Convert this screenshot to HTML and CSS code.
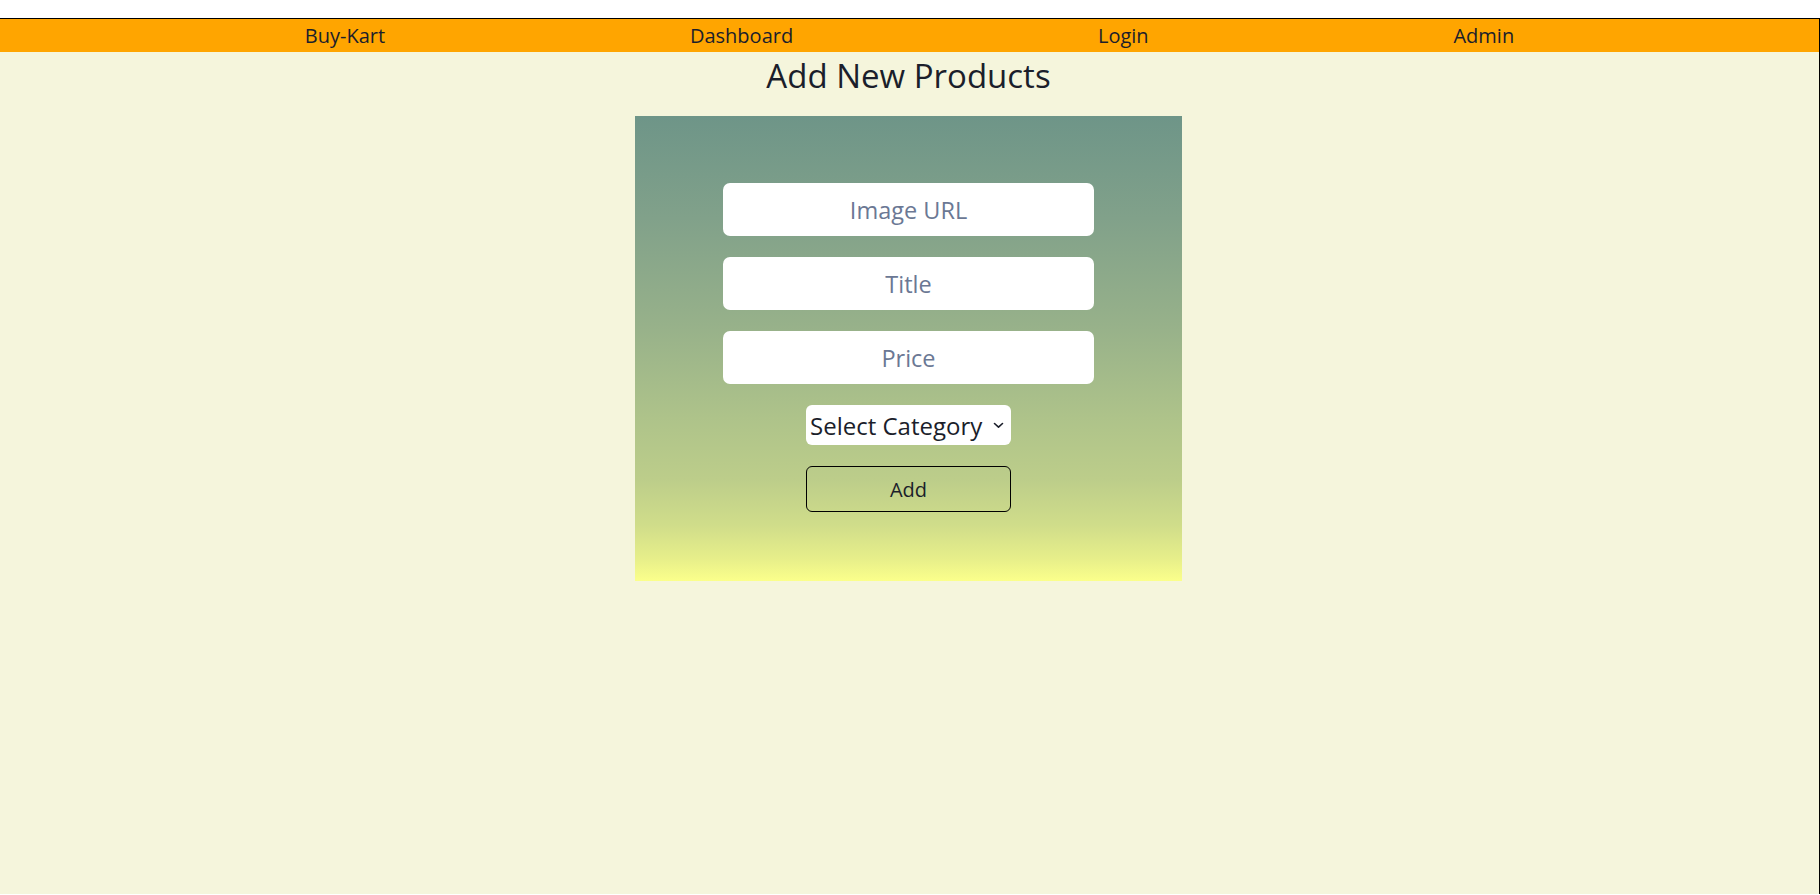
FILE: index.html
```html
<!DOCTYPE html>
<html lang="en">
<head>
<meta charset="utf-8">
<title>Buy-Kart - Add New Products</title>
<link rel="stylesheet" href="styles.css">
</head>
<body>
<div class="app">
  <nav class="navbar">
    <a class="nav-link" href="#">Buy-Kart</a>
    <a class="nav-link" href="#">Dashboard</a>
    <a class="nav-link" href="#">Login</a>
    <a class="nav-link" href="#">Admin</a>
  </nav>
  <main class="main">
    <h1 class="page-title">Add New Products</h1>
    <form class="product-card">
      <input class="field" type="text" placeholder="Image URL">
      <input class="field" type="text" placeholder="Title">
      <input class="field" type="text" placeholder="Price">
      <div class="select-wrap">
        <select class="category">
          <option>Select Category</option>
          <option>Men</option>
          <option>Women</option>
          <option>Jewelery</option>
          <option>Electronics</option>
        </select>
        <svg class="chevron" width="11" height="7" viewBox="0 0 11 7" aria-hidden="true">
          <path d="M1.5 1.5 L5.5 5.2 L9.5 1.5" fill="none" stroke="#1b1e2b" stroke-width="1.6" stroke-linecap="round" stroke-linejoin="round"/>
        </svg>
      </div>
      <button class="add-btn" type="button">Add</button>
    </form>
  </main>
</div>
</body>
</html>
```

FILE: styles.css
```css
html, body {
  margin: 0;
  padding: 0;
}

body {
  background: #ffffff;
  font-family: "Open Sans", "Noto Sans", sans-serif;
  color: #1b1e2b;
}

.app {
  margin-top: 18px;
  border-top: 1px solid #000;
  border-right: 1px solid #000;
  background: #f5f5dc;
  min-height: calc(100vh - 19px);
  box-sizing: border-box;
}

.navbar {
  display: flex;
  justify-content: space-evenly;
  align-items: center;
  background: #ffa500;
  height: 33px;
}

.nav-link {
  font-size: 20px;
  line-height: 33px;
  color: #1b1e2b;
  text-decoration: none;
}

.main {
  display: flex;
  flex-direction: column;
  align-items: center;
  padding-right: 2px;
}

.page-title {
  font-size: 33px;
  font-weight: 400;
  line-height: 40px;
  margin: 4px 0 20px;
  color: #1b1e2b;
}

.product-card {
  width: 547px;
  height: 465px;
  box-sizing: border-box;
  padding-top: 67px;
  display: flex;
  flex-direction: column;
  align-items: center;
  gap: 21px;
  background: linear-gradient(to bottom,
    #6e9588 0%,
    #81a18a 22%,
    #97b18a 45%,
    #aec38a 65%,
    #bccd8a 78%,
    #d0dd8a 88%,
    #e6ee8a 95%,
    #fbff8b 100%);
}

.field {
  width: 371px;
  height: 53px;
  box-sizing: border-box;
  border: none;
  border-radius: 7px;
  background: #fff;
  font-family: inherit;
  font-size: 23.5px;
  text-align: center;
  color: #1b1e2b;
  outline: none;
}

.field::placeholder {
  color: #6b7894;
  opacity: 1;
}

.select-wrap {
  position: relative;
  width: 205px;
  height: 40px;
}

.category {
  appearance: none;
  -webkit-appearance: none;
  width: 100%;
  height: 100%;
  box-sizing: border-box;
  border: none;
  border-radius: 6px;
  background: #fff;
  font-family: inherit;
  font-size: 24px;
  color: #1b1e2b;
  padding: 0 20px 0 4px;
  outline: none;
}

.chevron {
  position: absolute;
  right: 7px;
  top: 17px;
}

.add-btn {
  width: 205px;
  height: 46px;
  box-sizing: border-box;
  border: 1px solid #000;
  border-radius: 6px;
  background: transparent;
  font-family: inherit;
  font-size: 20px;
  color: #1b1e2b;
  cursor: pointer;
}
```
